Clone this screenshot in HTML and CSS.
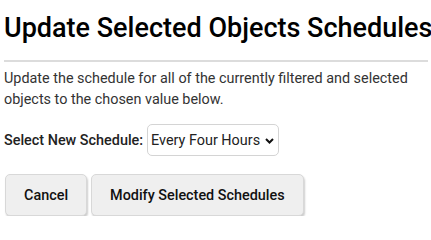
FILE: index.html
```html
<!DOCTYPE html>
<html>
<head>
<meta charset="utf-8">
<link rel="stylesheet" href="styles.css">
</head>
<body>
<div class="dialog">
  <h1 class="title">Update Selected Objects Schedules</h1>
  <hr class="rule">
  <p class="desc">Update the schedule for all of the currently filtered and selected objects to the chosen value below.</p>
  <div class="field">
    <label class="label" for="sched">Select New Schedule:</label>
    <span class="select-wrap">
      <select id="sched" class="select">
        <option>Every Four Hours</option>
      </select>
      <svg class="chev" width="9" height="6" viewBox="0 0 9 6"><path d="M1 1 L4.5 4.5 L8 1" fill="none" stroke="#111" stroke-width="2"/></svg>
    </span>
  </div>
  <div class="actions">
    <button class="btn">Cancel</button>
    <button class="btn">Modify Selected Schedules</button>
  </div>
</div>
</body>
</html>
```
FILE: styles.css
```css
html, body {
  margin: 0;
  padding: 0;
  background: #fff;
}
body {
  font-family: Roboto, "Liberation Sans", sans-serif;
  color: #000;
}
.dialog {
  padding: 0 3px 0 4px;
}
.title {
  margin: 0;
  padding-top: 11px;
  font-size: 27px;
  font-weight: 500;
  line-height: 34px;
  color: #000;
  white-space: nowrap;
}
.rule {
  margin: 15px 0 0 0;
  border: 0;
  border-top: 2px solid #dcdcdc;
  height: 0;
}
.desc {
  margin: 6px 0 0 0;
  font-size: 14.4px;
  line-height: 21px;
  color: #333;
}
.field {
  display: flex;
  align-items: center;
  margin-top: 14px;
  height: 32px;
}
.label {
  font-size: 14.4px;
  font-weight: 500;
  color: #222;
  margin-right: 4px;
}
.select-wrap {
  position: relative;
  display: inline-block;
}
.select {
  appearance: none;
  -webkit-appearance: none;
  font-family: Roboto, "Liberation Sans", sans-serif;
  font-size: 14.4px;
  color: #222;
  background: #fff;
  border: 1px solid #d4d4d4;
  border-radius: 5px;
  height: 32px;
  width: 132px;
  padding: 0 18px 0 3px;
  margin: 0;
}
.chev {
  position: absolute;
  right: 5px;
  top: 14px;
}
.actions {
  display: flex;
  gap: 4px;
  margin-top: 18px;
  padding-left: 1px;
}
.btn {
  font-family: Roboto, "Liberation Sans", sans-serif;
  font-size: 14.4px;
  font-weight: 500;
  color: #111;
  background: #efefef;
  border: 1px solid #d8d8d8;
  border-radius: 5px;
  height: 42px;
  padding: 0 18px;
  box-shadow: 1px 2px 2px rgba(0, 0, 0, 0.2);
  margin: 0;
}
```
